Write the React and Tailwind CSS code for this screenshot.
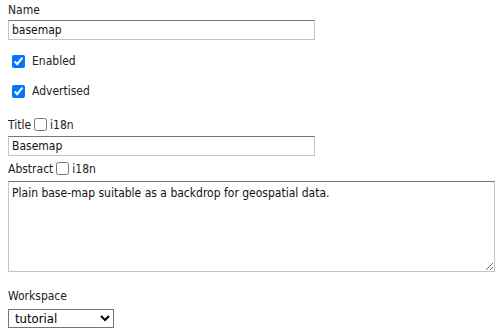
export default function App() {
  const field = 'block border border-[#c4c4c4] border-t-[#767676] bg-white px-[3px] text-[12px] text-[#111] outline-none';

  return (
    <div className="w-[504px] h-[336px] bg-white px-2 pt-[3px] text-[12px] text-[#222] font-['DejaVu_Sans_Condensed','Liberation_Sans',sans-serif]">
      <label className="block leading-[15px]">Name</label>
      <input className={`${field} mt-[2px] w-[307px] h-[20px]`} defaultValue="basemap" />

      <label className="mt-[13px] flex items-center gap-[7px] pl-1 h-[16px]">
        <input type="checkbox" defaultChecked className="m-0 w-[13px] h-[13px] accent-[#0075ff]" />
        <span>Enabled</span>
      </label>
      <label className="mt-[14px] flex items-center gap-[7px] pl-1 h-[16px]">
        <input type="checkbox" defaultChecked className="m-0 w-[13px] h-[13px] accent-[#0075ff]" />
        <span>Advertised</span>
      </label>

      <div className="mt-[18px] flex items-center h-[15px]">
        <span>Title</span>
        <input type="checkbox" className="mx-[3px] w-[13px] h-[13px]" />
        <span>i18n</span>
      </div>
      <input className={`${field} mt-[4px] w-[307px] h-[20px]`} defaultValue="Basemap" />

      <div className="mt-[5px] flex items-center h-[15px]">
        <span>Abstract</span>
        <input type="checkbox" className="mx-[3px] w-[13px] h-[13px]" />
        <span>i18n</span>
      </div>
      <textarea
        className={`${field} mt-[5px] w-[487px] h-[91px] py-[2px] resize`}
        defaultValue="Plain base-map suitable as a backdrop for geospatial data."
      />

      <label className="mt-[17px] block leading-[15px]">Workspace</label>
      <select className="mt-[5px] block w-[106px] h-[19px] border border-[#767676] bg-white text-[13px] text-black pl-[2px]">
        <option>tutorial</option>
      </select>
    </div>
  );
}
